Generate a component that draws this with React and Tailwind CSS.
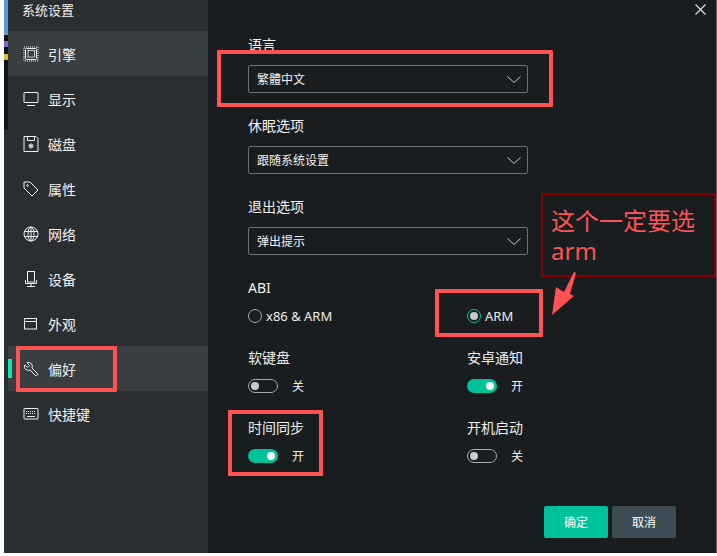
const FONT = "font-['Noto_Sans','Noto_Sans_CJK_SC',sans-serif]";

const S = { fill: "none", stroke: "currentColor", strokeWidth: 1 };

const icons = {
  cpu: (
    <svg width="16" height="16" viewBox="0 0 16 16" {...S}>
      <rect x="1" y="1" width="14" height="14" strokeDasharray="1 1" />
      <rect x="2.5" y="2.5" width="11" height="11" rx="1" />
      <rect x="5" y="4.500" width="6.500" height="6.500" strokeWidth="0.800" />
    </svg>
  ),
  monitor: (
    <svg width="16" height="16" viewBox="0 0 16 16" {...S}>
      <rect x="1" y="1.5" width="14" height="10" rx="0.5" />
      <path d="M4 14.5h8" />
    </svg>
  ),
  disk: (
    <svg width="16" height="16" viewBox="0 0 16 16" {...S}>
      <path d="M1 .5h12l2 2v13H1z" />
      <path d="M4.5 .5v4h7v-4" />
      <circle cx="8" cy="10" r="2" />
      <circle cx="8" cy="10" r=".7" fill="currentColor" />
    </svg>
  ),
  tag: (
    <svg width="16" height="16" viewBox="0 0 16 16" {...S}>
      <path d="M1 1h6l8 8-6 6-8-8z" />
      <circle cx="4.5" cy="4.5" r=".8" />
    </svg>
  ),
  globe: (
    <svg width="16" height="16" viewBox="0 0 16 16" {...S}>
      <circle cx="8" cy="8" r="7" />
      <ellipse cx="8" cy="8" rx="3" ry="7" />
      <path d="M1 5.5h14M1 10.5h14M8 1v14" />
    </svg>
  ),
  device: (
    <svg width="16" height="16" viewBox="0 0 16 16" {...S}>
      <rect x="4.5" y=".5" width="7" height="10.5" />
      <path d="M2.500 9v3.500h11V9M8 12.500v2.500M4 15.500h8" />
    </svg>
  ),
  window: (
    <svg width="16" height="16" viewBox="0 0 16 16" {...S}>
      <rect x="1.500" y="2.500" width="12" height="10.500" />
      <path d="M1.500 5.500h12" />
    </svg>
  ),
  wrench: (
    <svg width="16" height="16" viewBox="0 0 24 24" fill="none" stroke="currentColor" strokeWidth="1.500">
      <path
        transform="translate(24 0) scale(-1 1)"
        d="M14.700 6.300a1 1 0 0 0 0 1.400l1.600 1.600a1 1 0 0 0 1.400 0l3.106-3.105c.32-.322.863-.22.983.218a6 6 0 0 1-8.259 7.057l-7.910 7.910a1 1 0 0 1-2.999-3l7.910-7.910a6 6 0 0 1 7.057-8.259c.438.12.54.662.219.984z"
      />
    </svg>
  ),
  keyboard: (
    <svg width="16" height="16" viewBox="0 0 16 16" {...S}>
      <rect x="1" y="2.500" width="14" height="10.500" rx="0.500" />
      <path d="M3 5.500h10M3 7.500h10" strokeDasharray="1 1" />
      <path d="M4 10.500h8" />
    </svg>
  ),
};

const nav = [
  ["cpu", "引擎", "bg-[#3a3e41]"],
  ["monitor", "显示"],
  ["disk", "磁盘"],
  ["tag", "属性"],
  ["globe", "网络"],
  ["device", "设备"],
  ["window", "外观"],
  ["wrench", "偏好", "bg-[#3a3e41]", true],
  ["keyboard", "快捷键"],
];

function NavRow({ icon, label, bg, mark }) {
  return (
    <div className={`relative flex h-[45px] items-center gap-[9px] pl-[15px] ${bg || ""}`}>
      {mark && <div className="absolute left-0 top-[13px] h-[19px] w-[4px] bg-[#0fe8b5]" />}
      <span className="flex h-4 w-4 items-center justify-center text-[#f0f0f0]">{icons[icon]}</span>
      <span className="pt-[2px] text-[14px] leading-4 text-[#f2f2f2]">{label}</span>
    </div>
  );
}

function Select({ label, value }) {
  return (
    <div className="mb-[25px]">
      <div className="text-[14px] leading-4 text-[#f0f0f0]">{label}</div>
      <div className="mt-3 flex h-[28px] w-[280px] items-center justify-between rounded-[2px] border border-[#6f7275] pl-2 pr-[6px]">
        <span className="pt-[2px] text-[12px] leading-4 text-[#f2f2f2]">{value}</span>
        <svg width="14" height="7" viewBox="0 0 14 7" fill="none" stroke="#c4c6c7" strokeWidth="1">
          <path d="M.5.500 7 6.500 13.500.500" />
        </svg>
      </div>
    </div>
  );
}

function Radio({ on, label }) {
  return (
    <div className="flex h-4 items-center gap-1">
      <span className={`flex h-[14px] w-[14px] items-center justify-center rounded-full border ${on ? "border-[#00c29a]" : "border-[#a9abac]"}`}>
        {on && <span className="h-2 w-2 rounded-full bg-[#c9cacb]" />}
      </span>
      <span className="text-[13px] leading-4 text-[#eeeeee]">{label}</span>
    </div>
  );
}

function Toggle({ title, on }) {
  return (
    <div>
      <div className="text-[14px] leading-4 text-[#f0f0f0]">{title}</div>
      <div className="mt-[13px] flex h-[14px] items-center gap-[14px]">
        {on ? (
          <span className="flex h-[14px] w-[30px] items-center justify-end rounded-full bg-[#00c29a] pr-[3px]">
            <span className="h-2 w-2 rounded-full bg-white" />
          </span>
        ) : (
          <span className="flex h-[14px] w-[30px] items-center rounded-full border border-[#a9abac] pl-[2px]">
            <span className="h-2 w-2 rounded-full bg-[#c9cacb]" />
          </span>
        )}
        <span className="pt-[2px] text-[12px] leading-4 text-[#f0f0f0]">{on ? "开" : "关"}</span>
      </div>
    </div>
  );
}

export default function App() {
  return (
    <div className={`relative h-[556px] w-[717px] overflow-hidden bg-white ${FONT}`}>
      <div className="flex h-[553px]">
        {/* sliver of the window behind the dialog */}
        <div className="ml-[4px] flex w-[4px] flex-col bg-[#2b2f32]">
          <div className="h-[35px] bg-[#5b9bd5]" />
          <div className="flex h-[95px] flex-col bg-[#10141a] pt-[6px]">
            <div className="h-[6px] bg-[#8a63d2]" />
            <div className="mt-[7px] h-[6px] bg-[#e3b93c]" />
          </div>
        </div>

        <aside className="w-[200px] bg-[#2a2e31]">
          <div className="h-[31px] pl-[14px] pt-[2px] text-[13px] leading-4 text-[#f0f0f0]">系统设置</div>
          {nav.map(([icon, label, bg, mark]) => (
            <NavRow key={label} icon={icon} label={label} bg={bg} mark={mark} />
          ))}
        </aside>

        <main className="relative w-[508px] bg-[#191d20] pl-[40px] pt-[37px]">
          <svg className="absolute left-[487px] top-[4px]" width="11" height="11" viewBox="0 0 11 11" fill="none" stroke="#e8e8e8" strokeWidth="1.100">
            <path d="M.5.500l10 10M10.500.500l-10 10" />
          </svg>

          <Select label="语言" value="繁體中文" />
          <Select label="休眠选项" value="跟随系统设置" />
          <Select label="退出选项" value="弹出提示" />

          <div className="text-[14px] leading-4 text-[#f0f0f0]">ABI</div>
          <div className="mt-3 grid grid-cols-[219px_1fr]">
            <Radio label="x86 & ARM" />
            <Radio on label="ARM" />
          </div>
          <div className="mt-[26px] grid grid-cols-[219px_1fr] gap-y-[27px]">
            <Toggle title="软键盘" />
            <Toggle title="安卓通知" on />
            <Toggle title="时间同步" on />
            <Toggle title="开机启动" />
          </div>
          <div className="mt-[43px] flex w-[428px] justify-end gap-1">
            <button className="h-8 w-16 rounded-[2px] bg-[#00c29a] pt-[2px] text-[12px] text-white">确定</button>
            <button className="h-8 w-16 rounded-[2px] bg-[#3e4c56] pt-[2px] text-[12px] text-white">取消</button>
          </div>
        </main>
        <div className="w-px bg-[#5a5d5f]" />
      </div>

      {/* screenshot annotations */}
      <div className="absolute left-[217px] top-[50px] h-[57px] w-[336px] rounded-[1px] border-4 border-[#ff5252]" />
      <div className="absolute left-[16px] top-[346px] h-[46px] w-[101px] rounded-[1px] border-4 border-[#ff5252]" />
      <div className="absolute left-[435px] top-[289px] h-[48px] w-[108px] rounded-[1px] border-4 border-[#ff5252]" />
      <div className="absolute left-[228px] top-[410px] h-[66px] w-[95px] rounded-[1px] border-4 border-[#ff5252]" />
      <div className="absolute left-[541px] top-[193px] h-[84px] w-[175px] border-2 border-[#8b0000] pl-[8px] pt-[11px] text-[24px] leading-[30px] text-[#ff5252]">
        <div>这个一定要选</div>
        <div>arm</div>
      </div>
      <svg className="absolute left-[548px] top-[270px]" width="32" height="46" viewBox="548 270 32 46">
        <polygon points="574,272 576,273 570,294 574,296 552,315 556,287 564,292" fill="#ff5252" />
      </svg>
    </div>
  );
}
